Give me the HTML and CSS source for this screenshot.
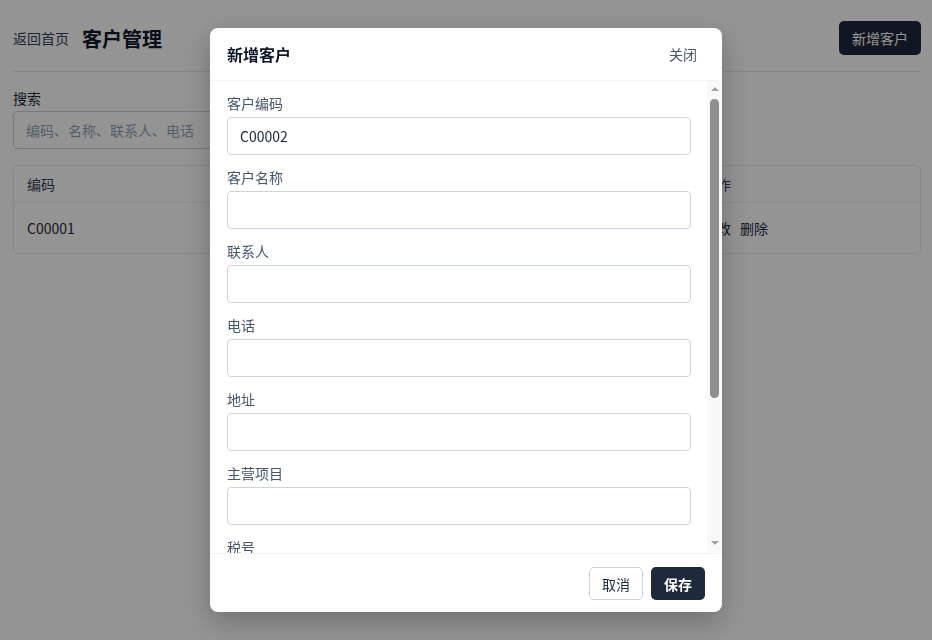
FILE: index.html
```html
<!DOCTYPE html>
<html lang="zh-CN">
<head>
    <meta charset="UTF-8">
    <meta name="viewport" content="width=device-width, initial-scale=1.0">
    <title>客户管理</title>
    <link rel="stylesheet" href="styles.css">
</head>
<body>
    <div class="page">
        <div class="page-header">
            <div class="title-group">
                <a class="back-link" href="#">返回首页</a>
                <h1>客户管理</h1>
            </div>
            <button type="button" class="btn btn-primary">新增客户</button>
        </div>

        <div class="search-bar">
            <label for="search">搜索</label>
            <input type="text" id="search" placeholder="编码、名称、联系人、电话">
        </div>

        <div class="table-card">
            <table>
                <thead>
                    <tr>
                        <th class="col-code">编码</th>
                        <th>名称</th>
                        <th>联系人</th>
                        <th>电话</th>
                        <th class="col-actions">操作</th>
                    </tr>
                </thead>
                <tbody>
                    <tr>
                        <td>C00001</td>
                        <td>示例客户</td>
                        <td>张三</td>
                        <td>13800000000</td>
                        <td class="col-actions"><a href="#">修改</a><a href="#">删除</a></td>
                    </tr>
                </tbody>
            </table>
        </div>
    </div>

    <div class="modal-mask">
        <div class="modal">
            <div class="modal-header">
                <h3>新增客户</h3>
                <button type="button" class="btn-close">关闭</button>
            </div>
            <div class="modal-scroll">
                <div class="modal-body">
                    <div class="form-group">
                        <label for="c-code">客户编码</label>
                        <input type="text" id="c-code" value="C00002">
                    </div>
                    <div class="form-group">
                        <label for="c-name">客户名称</label>
                        <input type="text" id="c-name">
                    </div>
                    <div class="form-group">
                        <label for="c-contact">联系人</label>
                        <input type="text" id="c-contact">
                    </div>
                    <div class="form-group">
                        <label for="c-phone">电话</label>
                        <input type="text" id="c-phone">
                    </div>
                    <div class="form-group">
                        <label for="c-address">地址</label>
                        <input type="text" id="c-address">
                    </div>
                    <div class="form-group">
                        <label for="c-business">主营项目</label>
                        <input type="text" id="c-business">
                    </div>
                    <div class="form-group">
                        <label for="c-tax">税号</label>
                        <input type="text" id="c-tax">
                    </div>
                    <div class="form-group">
                        <label for="c-bank">开户银行</label>
                        <input type="text" id="c-bank">
                    </div>
                    <div class="form-group">
                        <label for="c-account">银行账号</label>
                        <input type="text" id="c-account">
                    </div>
                </div>
                <div class="scrollbar">
                    <span class="arrow-up"></span>
                    <span class="thumb"></span>
                    <span class="arrow-down"></span>
                </div>
            </div>
            <div class="modal-footer">
                <button type="button" class="btn btn-default">取消</button>
                <button type="button" class="btn btn-primary btn-save">保存</button>
            </div>
        </div>
    </div>
</body>
</html>
```

FILE: styles.css
```css
* { box-sizing: border-box; }
body { margin: 0; font-family: "Noto Sans CJK SC", "Noto Sans", sans-serif; font-size: 14px; color: #1e293b; background-color: #fff; }
.page { padding: 21px 11px 20px 13px; }
.page-header { display: flex; justify-content: space-between; align-items: center; padding-bottom: 16px; border-bottom: 1px solid #e2e8f0; }
.title-group { display: flex; align-items: center; gap: 13px; }
.back-link { color: #334155; text-decoration: none; font-size: 14px; }
.page-header h1 { margin: 0; font-size: 20px; font-weight: 700; color: #0f172a; }
.btn { height: 34px; padding: 0 12px; border: 1px solid transparent; border-radius: 5px; font-family: inherit; font-size: 14px; cursor: pointer; }
.btn-primary { background-color: #1e293b; color: #fff; }
.btn-default { background-color: #fff; color: #1e293b; border-color: #cbd5e1; }
.search-bar { margin-top: 16px; display: flex; flex-direction: column; gap: 3px; }
.search-bar label { color: #1e293b; line-height: 20px; }
.search-bar input { width: 320px; height: 38px; padding: 0 12px; border: 1px solid #cbd5e1; border-radius: 5px; font-family: inherit; font-size: 14px; }
.search-bar input::placeholder { color: #94a3b8; }
.table-card { margin-top: 16px; border: 1px solid #e2e8f0; border-radius: 5px; overflow: hidden; }
table { width: 100%; border-collapse: collapse; }
th, td { text-align: left; padding: 0 13px; font-weight: 400; white-space: nowrap; }
th { height: 36px; color: #334155; border-bottom: 1px solid #eef2f6; }
td { height: 51px; color: #1e293b; }
.col-code { width: 210px; }
th.col-actions, td.col-actions { width: 230px; }
td.col-actions a { color: #1e293b; text-decoration: none; margin-right: 9px; }

.modal-mask { position: fixed; inset: 0; background-color: rgba(0, 0, 0, 0.42); display: flex; justify-content: center; align-items: center; }
.modal { width: 512px; max-height: calc(100vh - 56px); background-color: #fff; border-radius: 8px; box-shadow: 0 10px 30px rgba(0, 0, 0, 0.25); display: flex; flex-direction: column; overflow: hidden; }
.modal-header { display: flex; justify-content: space-between; align-items: center; padding: 14px 17px 14px 17px; border-bottom: 1px solid #f1f5f9; }
.modal-header h3 { margin: 0; font-size: 16px; line-height: 24px; font-weight: 700; color: #0f172a; }
.btn-close { background: none; border: none; padding: 2px 8px; font-family: inherit; font-size: 14px; color: #475569; cursor: pointer; }
.modal-scroll { flex: 1; min-height: 0; display: flex; }
.modal-body { flex: 1; overflow: hidden; padding: 12px 16px 4px 17px; }
.scrollbar { width: 15px; flex-shrink: 0; background-color: #f9f9f9; display: flex; flex-direction: column; align-items: center; padding: 6px 0 8px; }
.arrow-up { width: 0; height: 0; border-left: 4.5px solid transparent; border-right: 4.5px solid transparent; border-bottom: 4px solid #a3a3a3; }
.arrow-down { margin-top: auto; width: 0; height: 0; border-left: 4.5px solid transparent; border-right: 4.5px solid transparent; border-top: 4px solid #a3a3a3; }
.thumb { margin-top: 8px; width: 9px; height: 299px; border-radius: 5px; background-color: #8f8f8f; }
.form-group { margin-bottom: 12px; }
.form-group label { display: block; line-height: 20px; margin-bottom: 4px; color: #475569; }
.form-group input { display: block; width: 100%; height: 38px; padding: 0 12px; border: 1px solid #cbd5e1; border-radius: 4px; font-family: inherit; font-size: 14px; color: #1e293b; }
.modal-footer { display: flex; justify-content: flex-end; gap: 8px; padding: 13px 17px 12px; border-top: 1px solid #f1f5f9; }
.modal-footer .btn { height: 33px; padding: 0 12px; }
.btn-save { font-weight: 700; }
```
